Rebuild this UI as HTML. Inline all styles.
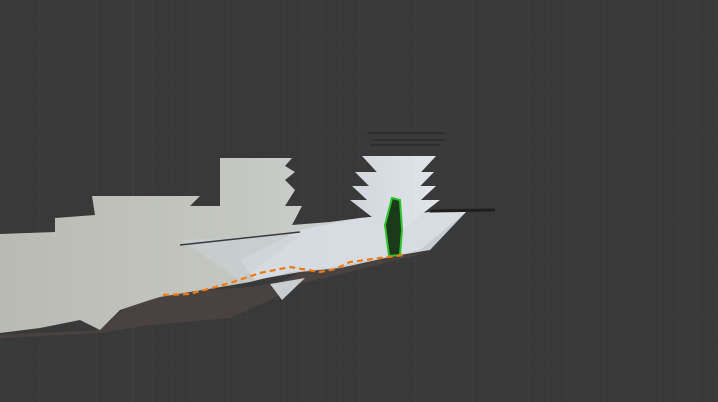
<!DOCTYPE html>
<html><head><style>
html,body{margin:0;padding:0;background:#393939;width:718px;height:402px;overflow:hidden}
</style></head><body>
<svg width="718" height="402" viewBox="0 0 718 402" xmlns="http://www.w3.org/2000/svg">
<defs>
<pattern id="g" x="2" y="-2" width="18.8" height="18.8" patternUnits="userSpaceOnUse">
<path d="M0 0V18.8M0 0H18.8" stroke="#404040" stroke-width="1" fill="none"/>
</pattern>
<linearGradient id="w" x1="0" x2="1" y1="0" y2="0">
<stop offset="0" stop-color="#b9bab3"/><stop offset="0.5" stop-color="#c4c6c0"/><stop offset="1" stop-color="#d3dbe2"/>
</linearGradient>
<linearGradient id="b" x1="0" x2="1"><stop offset="0" stop-color="#d0d6dc"/><stop offset="1" stop-color="#e0e6ec"/></linearGradient>
</defs>
<rect width="718" height="402" fill="#393939"/>
<rect width="718" height="402" fill="url(#g)"/>
<line x1="133" y1="0" x2="133" y2="402" stroke="#444"/>
<!-- dark ground -->
<path d="M0 335 L100 330 L120 312 L150 295 L200 290 L240 288 L280 283 L300 272 L340 268 L400 256 L430 252 L300 284 L270 300 L230 318 L150 325 L100 333 L0 338Z" fill="#4a4240"/>
<!-- left white spikes mass -->
<path d="M0 234 L55 232 L55 218 L95 215 L92 196 L200 196 L190 206 L220 206 L220 158 L292 158 L285 166 L295 172 L285 180 L295 190 L285 206 L302 206 L292 225 L330 222 L360 218 L430 212 L466 212 L420 250 L380 258 L330 268 L290 272 L250 282 L215 288 L190 292 L160 297 L150 300 L120 310 L100 330 L80 320 L40 328 L0 333Z" fill="url(#w)"/>
<!-- bright blue-white right part -->
<path d="M240 260 L300 230 L360 218 L400 214 L466 212 L430 250 L395 256 L340 268 L300 272 L255 280Z" fill="#d7dde3" opacity="0.9"/>
<!-- upper right cones (inverted triangles stacked) -->
<path d="M362 156 L436 156 L399 196Z M355 172 L434 172 L395 212Z M352 186 L436 186 L394 225Z M350 200 L440 200 L395 235Z" fill="url(#b)"/>
<path d="M180 240 L300 236 L240 280Z" fill="#c9d0d6" opacity="0.6"/>
<path d="M270 284 L305 278 L282 300Z" fill="#c8cdd1"/>
<!-- dark lines -->
<path d="M180 245 L300 232" stroke="#3a3a3a" stroke-width="1.5"/>
<path d="M430 211 L495 210" stroke="#1e1e1e" stroke-width="3"/>
<path d="M367 133 L445 133 M372 140 L445 140 M370 145 L440 145" stroke="#222" stroke-width="1"/>
<!-- green object -->
<path d="M389 256 L385 225 L392 198 L400 200 L402 230 L400 255Z" fill="#1b3a1a" stroke="#2fc22a" stroke-width="2"/>
<!-- orange dashed path -->
<path d="M163 295 L190 294 L230 283 L260 273 L290 267 L320 272 L335 269 L350 262 L380 258 L404 255" fill="none" stroke="#f07a10" stroke-width="2.2" stroke-dasharray="6 4"/>
</svg>
</body></html>
